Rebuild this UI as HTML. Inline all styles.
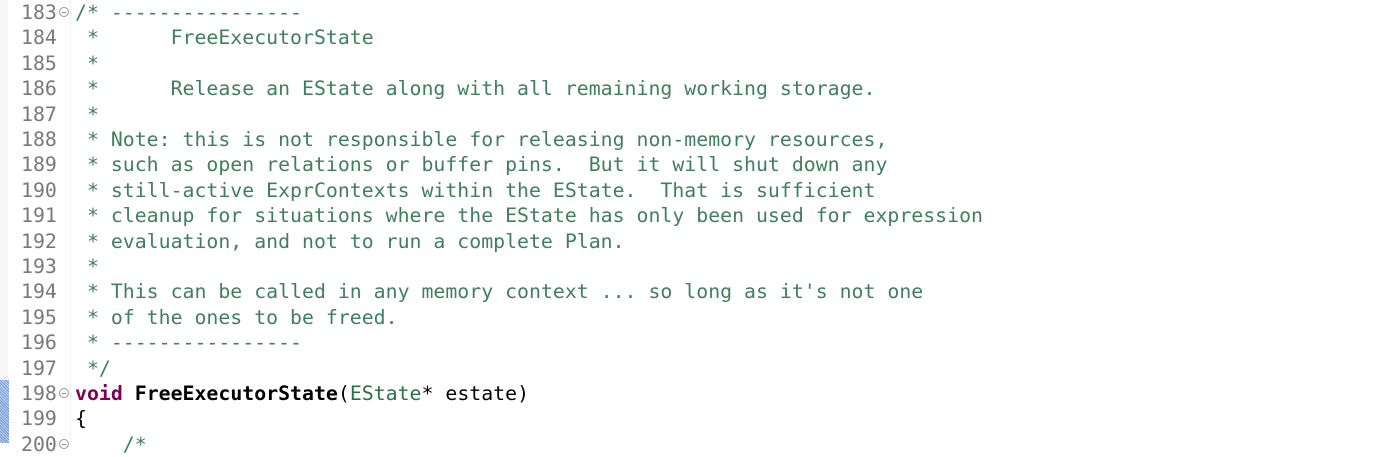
<!DOCTYPE html>
<html><head><style>
body{margin:0;width:1384px;height:443px;overflow:hidden;background:#fff;position:relative;font-family:"DejaVu Sans Mono","Liberation Mono",monospace;font-size:19.85px}
.strip{position:absolute;left:0;top:0;width:8px;height:443px;background:#f6f6f6}
.blue{position:absolute;left:0;top:380px;width:9px;height:63px;background:repeating-linear-gradient(45deg,#6f95d6 0 1px,#c8d6f0 1px 2px)}
.sep{position:absolute;left:70px;top:0;width:1px;height:443px;background:#f0f0f0}
.l{position:absolute;left:0;height:25.4px;line-height:25.4px;white-space:pre;width:1384px}
.n{position:absolute;left:21px;color:#787878}
.f{position:absolute;left:59px;top:7px;width:10px;height:10px;border:1px solid #999;border-radius:50%;box-sizing:border-box}
.f:after{content:"";position:absolute;left:2px;top:4px;width:4px;height:1px;background:#888}
.t{position:absolute;left:75px}
.c{color:#3f7f5f}.k{color:#7f0055;font-weight:bold}.b{font-weight:bold;color:#000}.g{color:#2a6e4c}
</style></head><body>
<div class="strip"></div><div class="sep"></div><div class="blue"></div>
<div class="l" style="top:0px"><span class="n">183</span><span class="f"></span><span class="t c">/* ----------------</span></div>
<div class="l" style="top:25.4px"><span class="n">184</span><span class="t c"> *      FreeExecutorState</span></div>
<div class="l" style="top:50.8px"><span class="n">185</span><span class="t c"> *</span></div>
<div class="l" style="top:76.2px"><span class="n">186</span><span class="t c"> *      Release an EState along with all remaining working storage.</span></div>
<div class="l" style="top:101.6px"><span class="n">187</span><span class="t c"> *</span></div>
<div class="l" style="top:127px"><span class="n">188</span><span class="t c"> * Note: this is not responsible for releasing non-memory resources,</span></div>
<div class="l" style="top:152.4px"><span class="n">189</span><span class="t c"> * such as open relations or buffer pins.  But it will shut down any</span></div>
<div class="l" style="top:177.8px"><span class="n">190</span><span class="t c"> * still-active ExprContexts within the EState.  That is sufficient</span></div>
<div class="l" style="top:203.2px"><span class="n">191</span><span class="t c"> * cleanup for situations where the EState has only been used for expression</span></div>
<div class="l" style="top:228.6px"><span class="n">192</span><span class="t c"> * evaluation, and not to run a complete Plan.</span></div>
<div class="l" style="top:254px"><span class="n">193</span><span class="t c"> *</span></div>
<div class="l" style="top:279.4px"><span class="n">194</span><span class="t c"> * This can be called in any memory context ... so long as it's not one</span></div>
<div class="l" style="top:304.8px"><span class="n">195</span><span class="t c"> * of the ones to be freed.</span></div>
<div class="l" style="top:330.2px"><span class="n">196</span><span class="t c"> * ----------------</span></div>
<div class="l" style="top:355.6px"><span class="n">197</span><span class="t c"> */</span></div>
<div class="l" style="top:381px"><span class="n">198</span><span class="f"></span><span class="t"><span class="k">void</span> <span class="b">FreeExecutorState</span>(<span class="g">EState</span>* estate)</span></div>
<div class="l" style="top:406.4px"><span class="n">199</span><span class="t">{</span></div>
<div class="l" style="top:431.8px"><span class="n">200</span><span class="f"></span><span class="t c">    /*</span></div>
</body></html>
